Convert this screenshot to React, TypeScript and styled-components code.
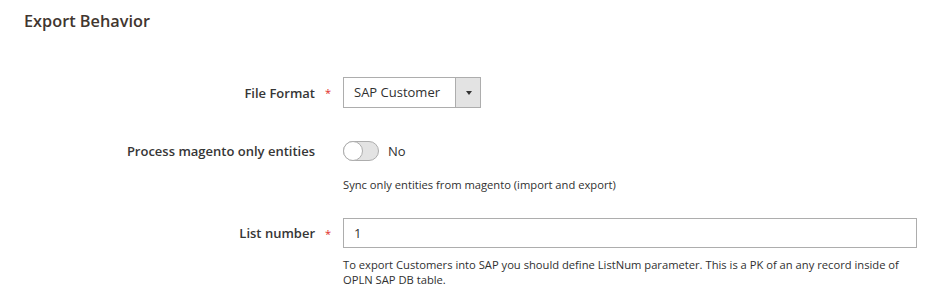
import styled, { createGlobalStyle } from "styled-components";

const GlobalStyle = createGlobalStyle`
  body {
    margin: 0;
    background: #fff;
    font-family: "Open Sans", "DejaVu Sans", sans-serif;
    color: #303030;
  }
`

const StyledPage = styled.div`
  width: 939px;
  height: 308px;
  overflow: hidden;
  background: #fff;
`

const StyledTitle = styled.div`
  padding: 11px 0 0 24px;
  height: 20px;
  font-size: 16.3px;
  line-height: 20px;
  font-weight: 600;
  color: #41362f;
`

const StyledFieldset = styled.div`
  margin-top: 46px;
  display: flex;
  flex-direction: column;
`

const StyledRow = styled.div<{ $height: number; $top?: number }>`
  display: grid;
  grid-template-columns: 343px 574px;
  align-items: center;
  height: ${p => p.$height}px;
  margin-top: ${p => p.$top || 0}px;
`

const StyledLabel = styled.div`
  display: flex;
  justify-content: flex-end;
  align-items: center;
  padding-right: 11px;
  font-size: 13px;
  font-weight: 600;
  color: #363636;
`

const StyledStar = styled.span`
  width: 7px;
  margin-left: 10px;
  color: #e02b27;
  font-size: 11px;
  font-weight: 400;
  line-height: 13px;
`

const StyledSelect = styled.div`
  display: flex;
  width: 138px;
  height: 31px;
  box-sizing: border-box;
  border: 1px solid #adadad;
  background: #fff;
`

const StyledSelectValue = styled.div`
  flex: 1;
  padding-left: 10px;
  font-size: 13px;
  line-height: 29px;
  color: #303030;
`

const StyledSelectArrow = styled.div`
  width: 24px;
  background: #e3e3e3;
  border-left: 1px solid #adadad;
  display: flex;
  align-items: center;
  justify-content: center;
  &::after {
    content: "";
    border-left: 3.5px solid transparent;
    border-right: 3.5px solid transparent;
    border-top: 4px solid #333;
    margin-left: 1px;
  }
`

const StyledSwitchLine = styled.div`
  display: flex;
  align-items: center;
  gap: 9px;
`

const StyledSwitch = styled.div`
  position: relative;
  width: 36px;
  height: 20px;
  box-sizing: border-box;
  border: 1px solid #adadad;
  border-radius: 11px;
  background: #e3e3e3;
`

const StyledKnob = styled.div`
  position: absolute;
  left: -1px;
  top: -1px;
  width: 20px;
  height: 20px;
  box-sizing: border-box;
  border: 1px solid #adadad;
  border-radius: 50%;
  background: #fff;
`

const StyledSwitchText = styled.span`
  font-size: 13px;
  color: #303030;
`

const StyledNote = styled.div<{ $top: number }>`
  margin-left: 343px;
  margin-top: ${p => p.$top}px;
  width: 574px;
  font-size: 11.2px;
  line-height: 15px;
  color: #303030;
`

const StyledInput = styled.div`
  height: 30px;
  box-sizing: border-box;
  border: 1px solid #adadad;
  background: #fff;
  padding-left: 10px;
  font-size: 13px;
  line-height: 28px;
  color: #303030;
`

const Label = ({ text, required }: { text: string; required?: boolean }) => <StyledLabel>
    {text}
    <StyledStar>{required ? "*" : ""}</StyledStar>
</StyledLabel>

export default function App() {
    return <StyledPage>
        <GlobalStyle />
        <StyledTitle>Export Behavior</StyledTitle>
        <StyledFieldset>
            <StyledRow $height={31}>
                <Label text="File Format" required />
                <StyledSelect>
                    <StyledSelectValue>SAP Customer</StyledSelectValue>
                    <StyledSelectArrow />
                </StyledSelect>
            </StyledRow>

            <StyledRow $height={22} $top={32}>
                <Label text="Process magento only entities" />
                <StyledSwitchLine>
                    <StyledSwitch>
                        <StyledKnob />
                    </StyledSwitch>
                    <StyledSwitchText>No</StyledSwitchText>
                </StyledSwitchLine>
            </StyledRow>
            <StyledNote $top={15}>Sync only entities from magento (import and export)</StyledNote>

            <StyledRow $height={30} $top={26}>
                <Label text="List number" required />
                <StyledInput>1</StyledInput>
            </StyledRow>
            <StyledNote $top={9}>
                To export Customers into SAP you should define ListNum parameter. This is a PK of an any record inside of OPLN SAP DB table.
            </StyledNote>
        </StyledFieldset>
    </StyledPage>
}
